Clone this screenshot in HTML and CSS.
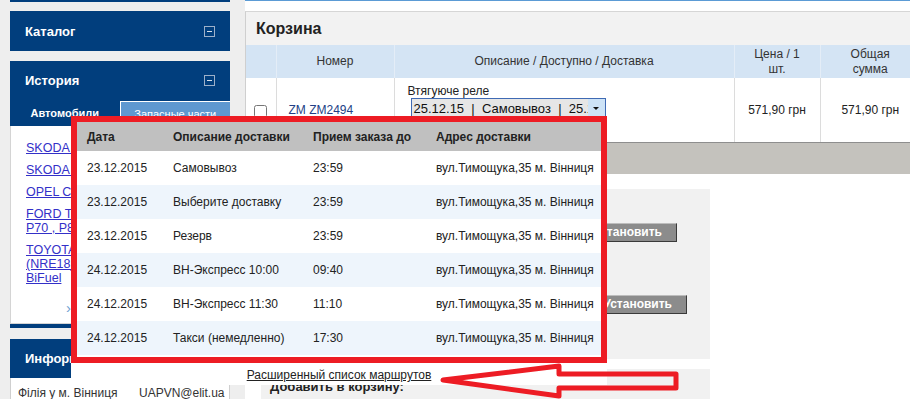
FILE: index.html
```html
<!DOCTYPE html>
<html lang="ru">
<head>
<meta charset="utf-8">
<title>Корзина</title>
<link rel="stylesheet" href="styles.css">
</head>
<body>
<div class="page">
  <aside class="sidebar">
    <div class="sb-top"></div>
    <section class="box box-catalog">
      <div class="box-head"><span>Каталог</span><span class="mini"></span></div>
    </section>
    <section class="box box-history">
      <div class="box-head hist-head"><span>История</span><span class="mini"></span></div>
      <div class="tabs">
        <span class="tab tab-active">Автомобили</span>
        <span class="tab tab-alt">Запасные части</span>
      </div>
      <div class="list">
        <a href="#">SKODA Fabia 1.4 16V</a>
        <a href="#">SKODA Octavia 1.6</a>
        <a href="#">OPEL COMBO 1.7 CDTI</a>
        <a href="#">FORD TRANSIT 2.4 TDCi<br>P70 , P80</a>
        <a href="#">TOYOTA COROLLA 1.6<br>(NRE18_) 1.6 LPG<br>BiFuel</a>
        <div class="pager">›</div>
      </div>
    </section>
    <section class="box box-info">
      <div class="box-head hist-head"><span>Информация</span></div>
      <div class="info-row"><span class="info-city">Філія у м. Вінниця</span><span>UAPVN@elit.ua</span></div>
    </section>
  </aside>

  <main class="main">
    <div class="cart">
      <h1 class="cart-title">Корзина</h1>
      <table class="cart-table">
        <colgroup><col class="c1"><col class="c2"><col class="c3"><col class="c4"><col class="c5"></colgroup>
        <thead>
          <tr><th></th><th>Номер</th><th>Описание / Доступно / Доставка</th><th>Цена / 1<br>шт.</th><th>Общая<br>сумма</th></tr>
        </thead>
        <tbody>
          <tr>
            <td class="chk"><input type="checkbox"></td>
            <td class="num"><a href="#">ZM ZM2494</a></td>
            <td class="desc">
              <div class="desc-name">Втягуюче реле</div>
              <div class="select"><span class="select-val">25.12.15&nbsp; |&nbsp; Самовывоз&nbsp; |&nbsp; 25.12.15</span><span class="select-arrow"></span></div>
            </td>
            <td class="price">571,90 грн</td>
            <td class="price">571,90 грн</td>
          </tr>
        </tbody>
      </table>
      <div class="cart-foot"></div>
    </div>
    <div class="panel panel-opts">
      <div class="opt-row opt-row-1"><span class="opt-label">Номер заказа клиента:</span><span class="opt-input"></span><button class="btn">Установить</button></div>
      <div class="opt-row opt-row-2"><span class="opt-label">Комментарий к заказу:</span><span class="opt-input"></span><button class="btn">Установить</button></div>
    </div>
    <div class="panel panel-add"><b>Добавить в корзину:</b></div>
  </main>
</div>

<div class="popup">
  <div class="frame">
    <table class="routes">
      <colgroup><col class="r1"><col class="r2"><col class="r3"><col class="r4"></colgroup>
      <thead>
        <tr><th>Дата</th><th>Описание доставки</th><th>Прием заказа до</th><th>Адрес доставки</th></tr>
      </thead>
      <tbody>
        <tr><td>23.12.2015</td><td>Самовывоз</td><td>23:59</td><td>вул.Тимощука,35 м. Вінниця</td></tr>
        <tr><td>23.12.2015</td><td>Выберите доставку</td><td>23:59</td><td>вул.Тимощука,35 м. Вінниця</td></tr>
        <tr><td>23.12.2015</td><td>Резерв</td><td>23:59</td><td>вул.Тимощука,35 м. Вінниця</td></tr>
        <tr><td>24.12.2015</td><td>ВН-Экспресс 10:00</td><td>09:40</td><td>вул.Тимощука,35 м. Вінниця</td></tr>
        <tr><td>24.12.2015</td><td>ВН-Экспресс 11:30</td><td>11:10</td><td>вул.Тимощука,35 м. Вінниця</td></tr>
        <tr><td>24.12.2015</td><td>Такси (немедленно)</td><td>17:30</td><td>вул.Тимощука,35 м. Вінниця</td></tr>
      </tbody>
    </table>
  </div>
  <div class="more"><a href="#">Расширенный список маршрутов</a></div>
</div>

<svg class="arrow" width="910" height="399" viewBox="0 0 910 399" xmlns="http://www.w3.org/2000/svg">
  <polygon points="443,380 559,366 559,374 676,374 676,388 559,388 559,396" fill="none" stroke="#ed1c24" stroke-width="5" stroke-linejoin="round"/>
</svg>
</body>
</html>
```

FILE: styles.css
```css
* { box-sizing: border-box; }

html, body {
  margin: 0;
  padding: 0;
}

body {
  position: relative;
  width: 910px;
  height: 399px;
  overflow: hidden;
  background: #eeeeee;
  font-family: "Liberation Sans", Arial, sans-serif;
  font-size: 12px;
  color: #222;
}

.page {
  display: flex;
  gap: 15px;
  padding-left: 10px;
  height: 399px;
}

/* ---------- sidebar ---------- */
.sidebar {
  width: 220px;
  flex: none;
}

.sb-top {
  height: 2px;
  background: #013e7d;
}

.box {
  background: #013e7d;
}

.box-catalog { margin-top: 9px; }
.box-history { margin-top: 10px; padding-bottom: 4px; }
.box-info { margin-top: 11px; }

.box-head {
  height: 40px;
  display: flex;
  align-items: center;
  justify-content: space-between;
  padding: 0 15px;
  color: #fff;
  font-weight: bold;
  font-size: 13px;
}

.hist-head { height: 39px; }

.mini {
  position: relative;
  width: 11px;
  height: 11px;
  border: 1px solid #9db0c9;
}

.mini::after {
  content: "";
  position: absolute;
  left: 2px;
  right: 2px;
  top: 4px;
  height: 1px;
  background: #d6dfea;
}

.tabs {
  display: flex;
  height: 26px;
}

.tab {
  flex: 1;
  text-align: center;
  line-height: 26px;
  font-size: 11px;
  color: #fff;
}

.tab-active { font-weight: bold; }

.tab-alt {
  background: #5e98d0;
  border-top: 1px solid #fff;
  border-left: 1px solid #fff;
  margin-top: 1px;
  line-height: 24px;
}

.list {
  background: #fff;
  border: 1px solid #d4d4d4;
  border-top: none;
  height: 198px;
  padding: 15px 0 0 15px;
}

.list a {
  display: block;
  color: #3330c8;
  font-size: 12.5px;
  line-height: 14px;
  margin-bottom: 8px;
  white-space: nowrap;
}

.pager {
  margin: 15px 0 0 40px;
  color: #6f9fd2;
  font-size: 15px;
  line-height: 16px;
}

.info-row {
  background: #fff;
  border-left: 1px solid #cfcfcf;
  border-right: 1px solid #cfcfcf;
  height: 24px;
  padding: 8px 0 0 7px;
  display: flex;
  font-size: 12px;
  color: #333;
  white-space: nowrap;
}

.info-city { width: 121px; flex: none; }

/* ---------- main ---------- */
.main {
  flex: 1;
  min-width: 0;
  background: #fff;
  border-top: 1px solid #5b9bd5;
  padding-top: 10px;
  overflow: hidden;
}

.cart {
  border-left: 1px solid #cfcfcf;
  border-top: 1px solid #d6d6d6;
}

.cart-title {
  margin: 0;
  height: 33px;
  line-height: 33px;
  padding-left: 10px;
  background: #f2f2f2;
  font-size: 16px;
  font-weight: bold;
  color: #222;
}

.cart-table {
  width: 674px;
  border-collapse: collapse;
  table-layout: fixed;
}

.c1 { width: 30px; }
.c2 { width: 118px; }
.c3 { width: 340px; }
.c4 { width: 86px; }
.c5 { width: 100px; }

.cart-table th {
  height: 33px;
  padding: 0;
  background: #d4e4f4;
  font-weight: normal;
  font-size: 12px;
  line-height: 15px;
  color: #333;
  border-left: 1px solid #e4edf7;
}

.cart-table th:first-child,
.cart-table td:first-child { border-left: none; }

.cart-table td {
  height: 64px;
  padding: 0;
  border-left: 1px solid #dcdcdc;
  border-bottom: 1px solid #8e8e8e;
  vertical-align: middle;
}

.chk { text-align: center; }
.chk input { margin: 6px 0 0 0; width: 13px; height: 13px; }

.num { padding-left: 12px !important; }
.num a {
  color: #223f86;
  text-decoration: none;
}

.cart-table td.desc {
  vertical-align: top;
  padding: 6px 0 0 13px;
}

.desc-name {
  color: #222;
  line-height: 14px;
}

.select {
  display: flex;
  width: 195px;
  height: 21px;
  margin: 0 0 0 3px;
  border: 1px solid #3f6ab4;
  background: #e6e6e6;
  overflow: hidden;
}

.select-val {
  flex: 1;
  font-size: 13px;
  line-height: 19px;
  padding-left: 2px;
  white-space: nowrap;
  overflow: hidden;
  color: #111;
}

.select-arrow {
  position: relative;
  width: 17px;
  background: #cde3f7;
}

.select-arrow::after {
  content: "";
  position: absolute;
  left: 5px;
  top: 8px;
  border-left: 3px solid transparent;
  border-right: 3px solid transparent;
  border-top: 3px solid #111;
}

.price {
  text-align: center;
  color: #222;
}

.cart-foot {
  height: 31px;
  background: #c4c2bd;
}

.panel {
  margin-left: 16px;
  width: 449px;
  background: #f1f1f1;
}

.panel-opts {
  margin-top: 15px;
  height: 170px;
  padding-top: 34px;
}

.opt-row {
  display: flex;
  align-items: center;
  justify-content: flex-end;
  gap: 8px;
  height: 19px;
}

.opt-row-1 { padding-right: 33px; }
.opt-row-2 { padding-right: 23px; margin-top: 53px; }

.opt-label { color: #222; font-weight: bold; }

.opt-input {
  width: 150px;
  height: 19px;
  background: #fff;
  border: 1px solid #aaa;
}

.btn {
  height: 19px;
  padding: 0 14px;
  background: #8c8c8c;
  color: #fff;
  font-family: "Liberation Sans", Arial, sans-serif;
  font-weight: bold;
  font-size: 12px;
  border: 1px solid;
  border-color: #bdbdbd #3a3a3a #3a3a3a #bdbdbd;
}

.panel-add {
  margin-top: 10px;
  height: 40px;
  padding: 10px 0 0 9px;
  font-size: 13px;
  color: #222;
}

/* ---------- popup overlay ---------- */
.popup {
  position: absolute;
  left: 71px;
  top: 116px;
  width: 536px;
  background: #fff;
}

.frame {
  border: 6px solid #ed1c24;
  padding-bottom: 2px;
}

.routes {
  width: 100%;
  border-collapse: collapse;
  table-layout: fixed;
}

.r1 { width: 86px; }
.r2 { width: 140px; }
.r3 { width: 123px; }
.r4 { width: 175px; }

.routes th {
  height: 29px;
  padding: 0 0 0 10px;
  background: #c0c0c0;
  text-align: left;
  font-weight: bold;
  font-size: 12px;
  color: #222;
}

.routes td {
  height: 34px;
  padding: 0 0 0 10px;
  font-size: 12px;
  color: #222;
  white-space: nowrap;
}

.routes tbody tr:nth-child(even) td { background: #eef5fc; }

.more {
  height: 22px;
  line-height: 24px;
  text-align: center;
  font-size: 12px;
}

.more a {
  color: #222;
  text-decoration: underline;
}

.arrow {
  position: absolute;
  left: 0;
  top: 0;
  pointer-events: none;
}
```
